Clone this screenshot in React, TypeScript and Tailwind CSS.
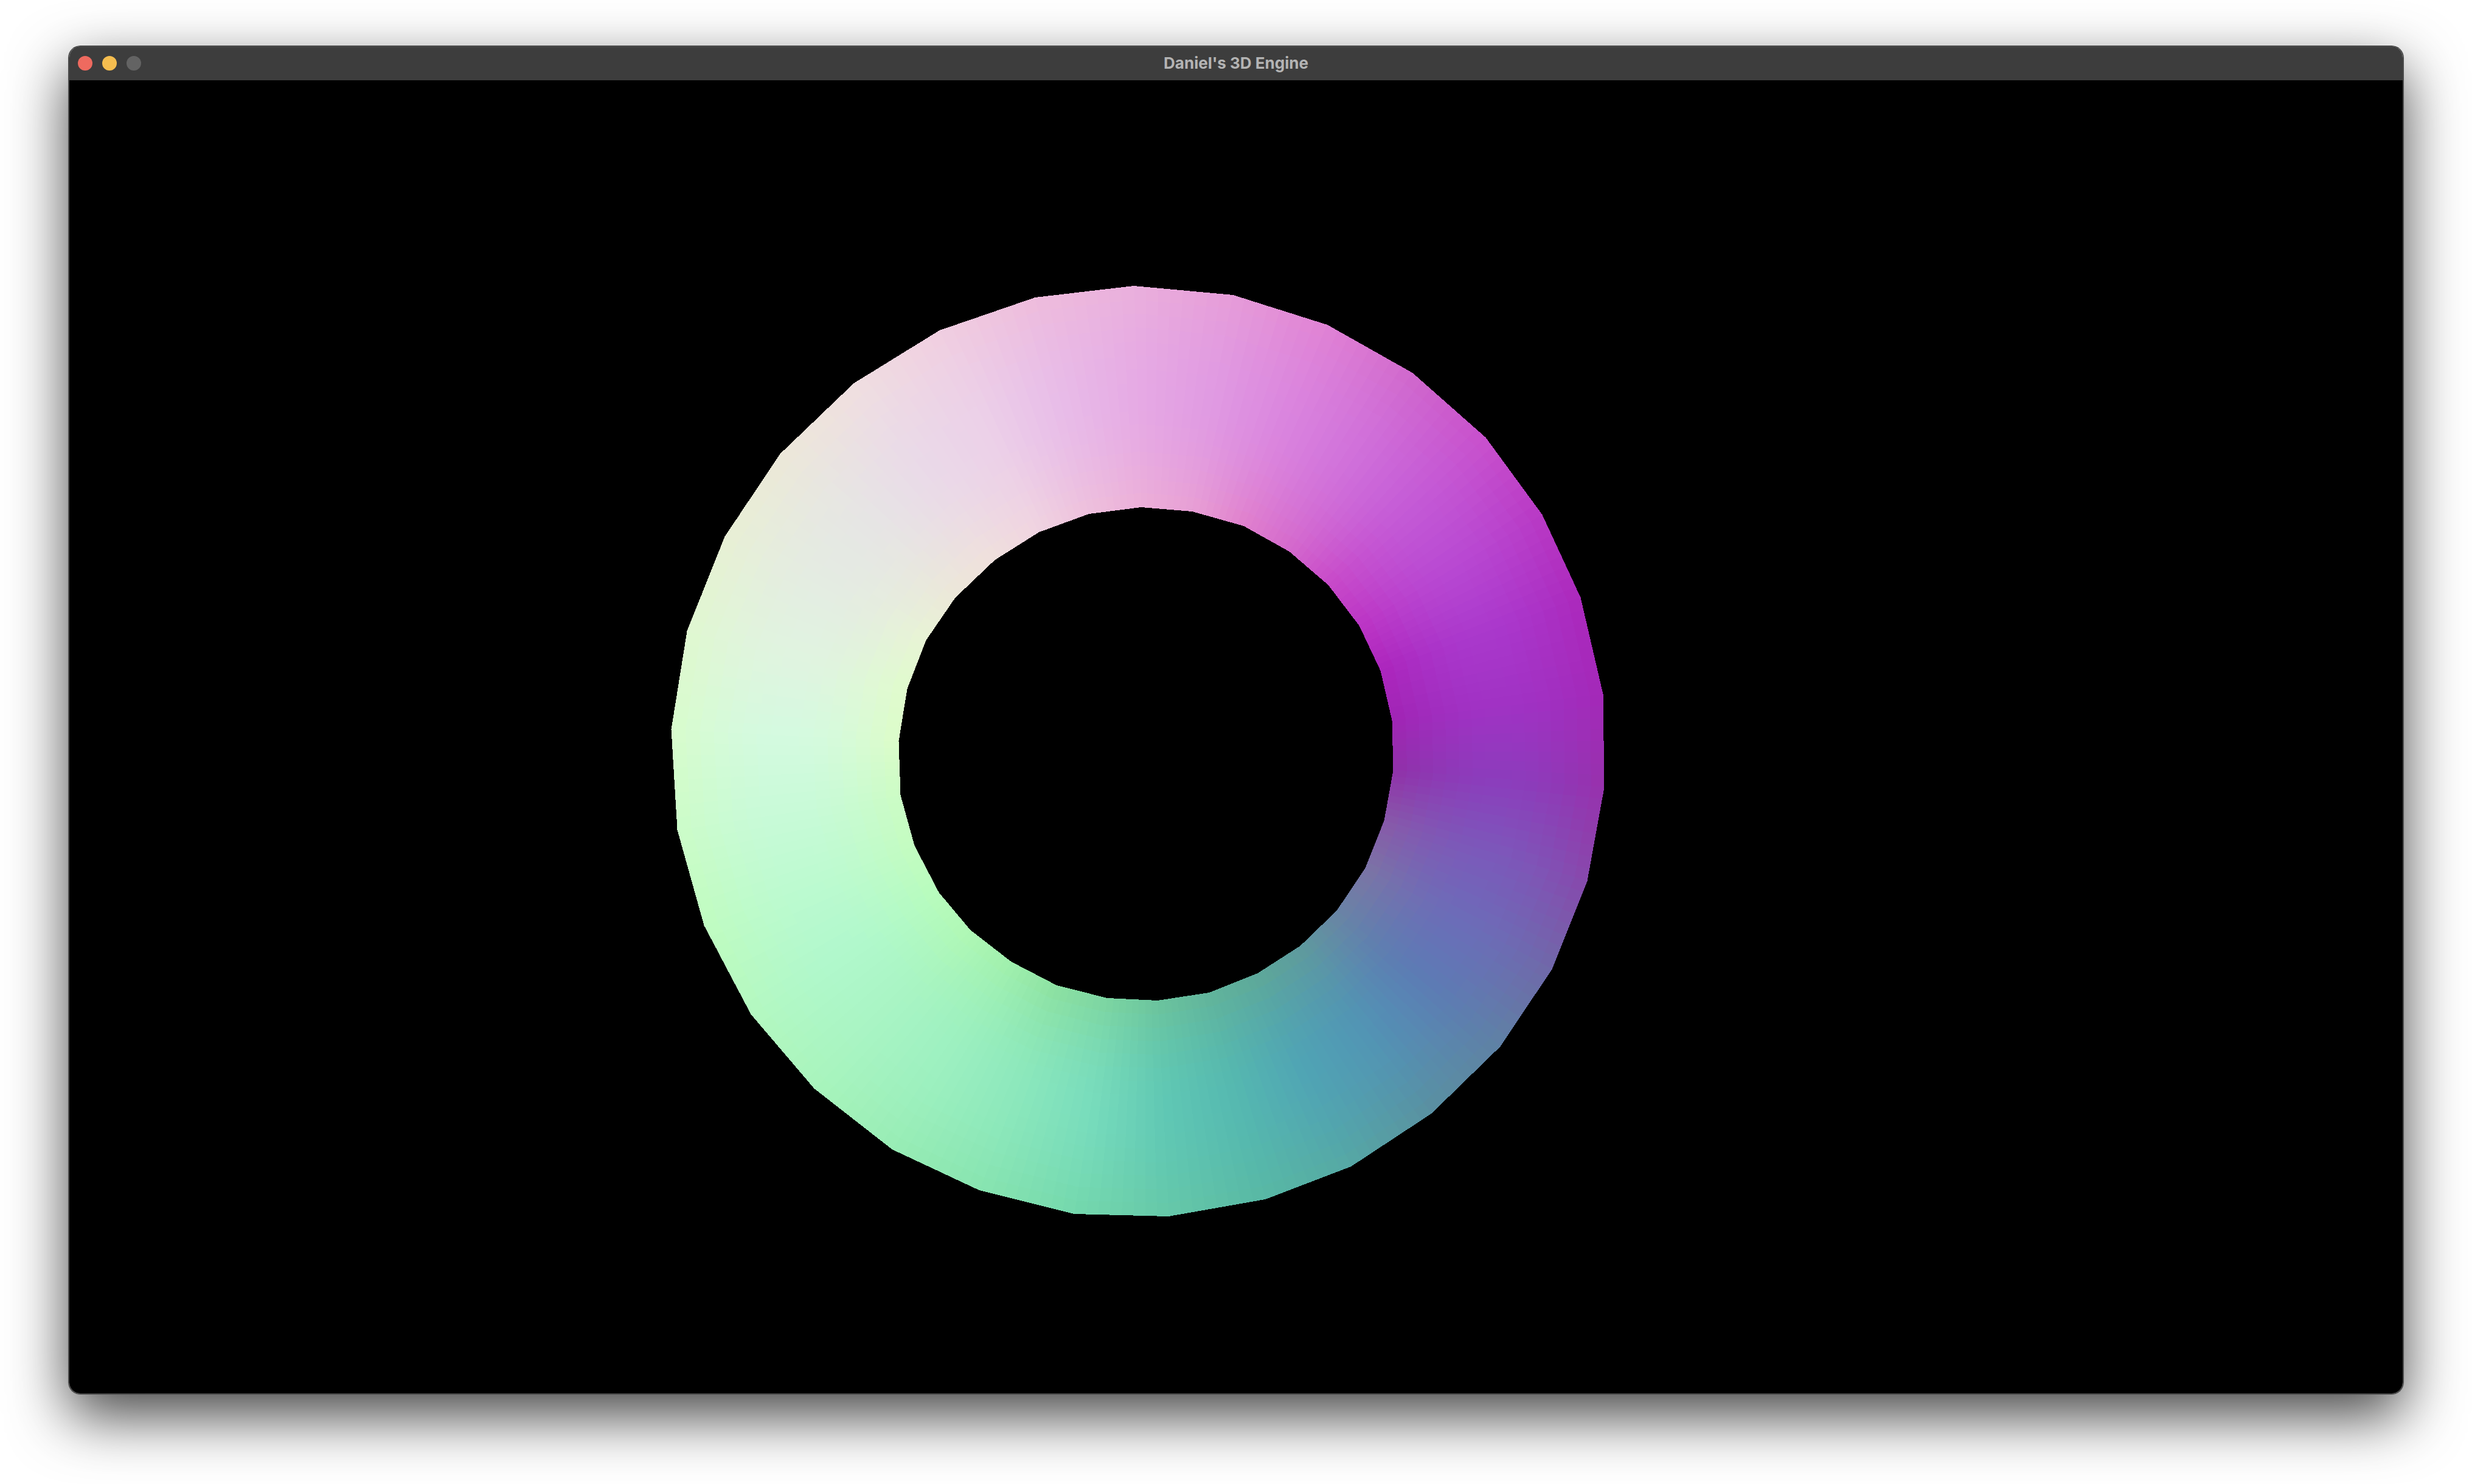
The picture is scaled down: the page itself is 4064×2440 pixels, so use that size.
import React from "react";

type Point = [number, number];
type Rgb = [number, number, number];

const outerRing: Point[] = [
  [1864, 470], [2027, 485], [2182, 534], [2322, 613], [2442, 719], [2535, 846],
  [2598, 982], [2635, 1141], [2637, 1294], [2609, 1448], [2551, 1593], [2466, 1720],
  [2353, 1830], [2221, 1917], [2080, 1971], [1921, 1999], [1766, 1995], [1610, 1956],
  [1467, 1889], [1339, 1789], [1235, 1667], [1158, 1521], [1114, 1364], [1104, 1199],
  [1130, 1037], [1192, 882], [1283, 746], [1404, 630], [1545, 543], [1702, 489],
];

const innerRing: Point[] = [
  [1876, 833], [1960, 840], [2045, 864], [2120, 906], [2184, 961], [2235, 1028],
  [2270, 1102], [2289, 1184], [2291, 1266], [2276, 1349], [2245, 1427], [2198, 1497],
  [2138, 1555], [2068, 1600], [1988, 1632], [1903, 1645], [1820, 1641], [1737, 1620],
  [1662, 1581], [1595, 1529], [1543, 1467], [1503, 1390], [1480, 1307], [1477, 1218],
  [1491, 1132], [1522, 1052], [1570, 982], [1635, 920], [1708, 874], [1790, 844],
];

// vertex colours read off the reference: outer edge, middle of the tube, inner edge
const outerColors = [
  "#eab0dc", "#e69cd8", "#e082d4", "#d068cc", "#c850cc", "#b838c4",
  "#ac28bc", "#a428b8", "#9830ac", "#8848ac", "#7068a8", "#5f82a4",
  "#5a90a0", "#56a8a4", "#58b8a4", "#66c8a8", "#74d8ac", "#88e4b0",
  "#98ecb4", "#a8f4bc", "#b4f8c0", "#c0fcc0", "#ccfcc8", "#d8fccc",
  "#e0f8d0", "#e8f0d4", "#ece8d8", "#f0dfe0", "#f0cee0", "#eebcdc",
];

const midColors = [
  "#e6aae4", "#e09ae2", "#da84de", "#d070da", "#c45ad6", "#b848d2",
  "#aa38cc", "#a032c4", "#8c3cbc", "#7c58ba", "#6c6cb8", "#5c7cb4",
  "#5294b4", "#50a4b4", "#55b8b0", "#60c8b4", "#78dcbc", "#8ce8bc",
  "#9cf0c0", "#a8f4c4", "#b0f8cc", "#bcfad0", "#c8fad8", "#d4fae0",
  "#e0f4e0", "#e4ece2", "#e6e6e4", "#eadae8", "#ecd0e8", "#e8bce8",
];

const innerColors = [
  "#ecb0d8", "#e8a0d4", "#e080cc", "#d468cc", "#c848c8", "#bc34c4",
  "#ac24bc", "#a024b4", "#9030a8", "#8858a8", "#7c74a4", "#6a84a4",
  "#5f9a9c", "#5ea898", "#62b49a", "#6cc49c", "#7cd4a0", "#8ce0a0",
  "#a0f0ac", "#b0f8b4", "#b8fcbc", "#c4fcc0", "#ccfcc4", "#dcfcc8",
  "#e0fccc", "#e8f4d4", "#ece8d8", "#f0e0dc", "#f0d4e0", "#eec0dc",
];

const hexToRgb = (hex: string): Rgb => [
  parseInt(hex.slice(1, 3), 16),
  parseInt(hex.slice(3, 5), 16),
  parseInt(hex.slice(5, 7), 16),
];

const midRing: Point[] = outerRing.map((p, i) => [
  (p[0] + innerRing[i][0]) / 2,
  (p[1] + innerRing[i][1]) / 2,
]);

const bilerp = (a: number[], b: number[], c: number[], d: number[], u: number, v: number) =>
  a.map((_, k) => {
    const top = a[k] + (b[k] - a[k]) * u;
    const bottom = d[k] + (c[k] - d[k]) * u;
    return top + (bottom - top) * v;
  });

const STEPS = 8;

// one band of the ring, split in small flat cells since svg has no vertex colours.
// edgeAtA says which side is the silhouette: the tube's colour flattens out towards the middle
const buildBand = (
  ringA: Point[],
  ringB: Point[],
  colorsA: string[],
  colorsB: string[],
  edgeAtA: boolean
) => {
  const cells: { points: string; fill: string }[] = [];
  const count = ringA.length;
  for (let i = 0; i < count; i++) {
    const j = (i + 1) % count;
    const [ca, cb, cc, cd] = [colorsA[i], colorsA[j], colorsB[j], colorsB[i]].map(hexToRgb);
    for (let s = 0; s < STEPS; s++) {
      for (let t = 0; t < STEPS; t++) {
        const u0 = s / STEPS;
        const u1 = (s + 1) / STEPS;
        const v0 = t / STEPS;
        const v1 = (t + 1) / STEPS;
        const corners = [
          bilerp(ringA[i], ringA[j], ringB[j], ringB[i], u0, v0),
          bilerp(ringA[i], ringA[j], ringB[j], ringB[i], u1, v0),
          bilerp(ringA[i], ringA[j], ringB[j], ringB[i], u1, v1),
          bilerp(ringA[i], ringA[j], ringB[j], ringB[i], u0, v1),
        ];
        const vMid = (v0 + v1) / 2;
        const profile = edgeAtA
          ? Math.sin((vMid * Math.PI) / 2)
          : 1 - Math.sin(((1 - vMid) * Math.PI) / 2);
        const color = bilerp(ca, cb, cc, cd, (u0 + u1) / 2, profile).map(Math.round);
        cells.push({
          points: corners.map((c) => `${c[0].toFixed(1)},${c[1].toFixed(1)}`).join(" "),
          fill: `rgb(${color[0]},${color[1]},${color[2]})`,
        });
      }
    }
  }
  return cells;
};

const ringCells = [
  ...buildBand(outerRing, midRing, outerColors, midColors, true),
  ...buildBand(midRing, innerRing, midColors, innerColors, false),
];

const Torus = () => (
  <svg viewBox="114 132 3836 2158" className="block w-full h-full" shapeRendering="crispEdges">
    {ringCells.map((cell, i) => (
      <polygon key={i} points={cell.points} fill={cell.fill} stroke={cell.fill} strokeWidth={1} />
    ))}
  </svg>
);

const App = () => {
  return (
    <div className="w-[4064px] h-[2440px] bg-white pt-[75px] pl-[112px]">
      <div className="w-[3840px] h-[2218px] flex flex-col rounded-[20px] overflow-hidden border-2 border-[#4a4a4a] border-t border-t-[#262626] shadow-[0_36px_96px_rgba(0,0,0,0.72)]">
        <div className="h-[56px] shrink-0 flex items-center bg-[#3d3d3d] px-[14px] shadow-[inset_0_1px_0_#5c5c5c]">
          <div className="flex-1 flex items-center gap-4">
            <span className="w-6 h-6 rounded-full bg-[#ee6a5f]" />
            <span className="w-6 h-6 rounded-full bg-[#f5bd4f]" />
            <span className="w-6 h-6 rounded-full bg-[#636363]" />
          </div>
          <span className="font-['Inter',sans-serif] font-bold text-[26px] leading-none text-[#b4b4b4]">
            Daniel's 3D Engine
          </span>
          <div className="flex-1" />
        </div>
        <div className="flex-1 min-h-0 bg-black">
          <Torus />
        </div>
      </div>
    </div>
  );
};

export default App;
